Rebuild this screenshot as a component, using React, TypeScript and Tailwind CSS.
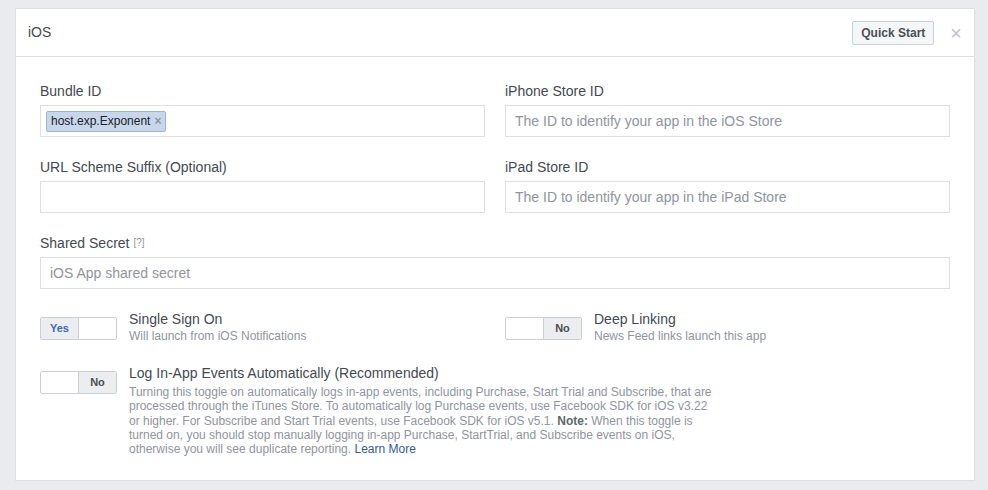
import React from "react"

const font = { fontFamily: '"Liberation Sans", Arial, sans-serif' }

function Field({
  label,
  placeholder,
  hint,
  children,
}: {
  label: string
  placeholder?: string
  hint?: boolean
  children?: React.ReactNode
}) {
  return (
    <div className="flex flex-col">
      <label className="mb-1.5 flex h-4 items-center gap-1 text-[14px] leading-4 text-[#444950]">
        {label}
        {hint && <span className="text-[10px] leading-none text-[#90949c]">[?]</span>}
      </label>
      <div className="flex h-[32px] items-center border border-[#dddfe2] bg-white px-[5px]">
        {children ?? (
          <span className="pl-[4px] text-[14px] text-[#90949c]">{placeholder ?? ""}</span>
        )}
      </div>
    </div>
  )
}

function Toggle({ on }: { on: boolean }) {
  return (
    <div className="mt-1.5 flex h-[23px] w-[77px] shrink-0 overflow-hidden rounded-[2px] border border-[#ccd0d5] bg-white">
      {on ? (
        <>
          <div className="flex w-[38px] items-center justify-center border-r border-[#ccd0d5] bg-[#ebedf0] text-[11px] font-bold text-[#4267b2]">
            Yes
          </div>
          <div className="flex-1" />
        </>
      ) : (
        <>
          <div className="flex-1" />
          <div className="flex w-[38px] items-center justify-center border-l border-[#ccd0d5] bg-[#ebedf0] text-[11px] font-bold text-[#4b4f56]">
            No
          </div>
        </>
      )}
    </div>
  )
}

function ToggleRow({
  on,
  title,
  tall,
  children,
}: {
  on: boolean
  title: string
  tall?: boolean
  children: React.ReactNode
}) {
  return (
    <div className="flex items-start gap-3">
      <Toggle on={on} />
      <div className="flex flex-col">
        <div className="text-[14px] leading-4 text-[#444950]">{title}</div>
        <div
          className={
            tall
              ? "mt-1 text-[12px] leading-[14.25px] text-[#90949c]"
              : "mt-0.5 text-[12px] leading-[14px] text-[#90949c]"
          }
        >
          {children}
        </div>
      </div>
    </div>
  )
}

export default function App() {
  return (
    <div className="min-h-[490px] bg-[#e9ebee] px-[15px] pt-2" style={font}>
      <div className="w-[960px] border border-[#dddfe2] bg-white">
        {/* header */}
        <div className="flex h-[48px] items-center justify-between border-b border-[#dddfe2] pl-3 pr-3">
          <span className="text-[14px] text-[#444950]">iOS</span>
          <div className="flex items-center gap-4">
            <button
              type="button"
              className="h-[24px] rounded-[2px] border border-[#ccd0d5] bg-[#f5f6f7] px-2 text-[12px] font-bold text-[#4b4f56]"
            >
              Quick Start
            </button>
            <span className="text-[20px] leading-none text-[#bec2c9]">×</span>
          </div>
        </div>

        {/* body */}
        <div className="flex flex-col px-6 pb-6 pt-[26px]">
          <div className="grid grid-cols-2 gap-x-5 gap-y-[22px]">
            <Field label="Bundle ID">
              <span className="flex h-[21px] items-center gap-1 rounded-[2px] border border-[#9cb4d8] bg-[#c8d6ec] pl-[4px] pr-[4px] text-[12px] text-[#1d2129]">
                host.exp.Exponent
                <span className="text-[12px] font-bold leading-none text-[#8d949e]">×</span>
              </span>
            </Field>
            <Field label="iPhone Store ID" placeholder="The ID to identify your app in the iOS Store" />
            <Field label="URL Scheme Suffix (Optional)" />
            <Field label="iPad Store ID" placeholder="The ID to identify your app in the iPad Store" />
            <div className="col-span-2">
              <Field label="Shared Secret" hint placeholder="iOS App shared secret" />
            </div>
          </div>

          <div className="mt-[22px] grid grid-cols-2 gap-x-5">
            <ToggleRow on title="Single Sign On">
              Will launch from iOS Notifications
            </ToggleRow>
            <ToggleRow on={false} title="Deep Linking">
              News Feed links launch this app
            </ToggleRow>
          </div>

          <div className="mt-[22px]">
            <ToggleRow on={false} tall title="Log In-App Events Automatically (Recommended)">
              Turning this toggle on automatically logs in-app events, including Purchase, Start Trial and Subscribe, that are
              <br />
              processed through the iTunes Store. To automatically log Purchase events, use Facebook SDK for iOS v3.22
              <br />
              or higher. For Subscribe and Start Trial events, use Facebook SDK for iOS v5.1.{" "}
              <span className="font-bold text-[#606770]">Note:</span> When this toggle is
              <br />
              turned on, you should stop manually logging in-app Purchase, StartTrial, and Subscribe events on iOS,
              <br />
              otherwise you will see duplicate reporting.{" "}
              <a href="#" className="text-[#365899]">
                Learn More
              </a>
            </ToggleRow>
          </div>
        </div>
      </div>
    </div>
  )
}
